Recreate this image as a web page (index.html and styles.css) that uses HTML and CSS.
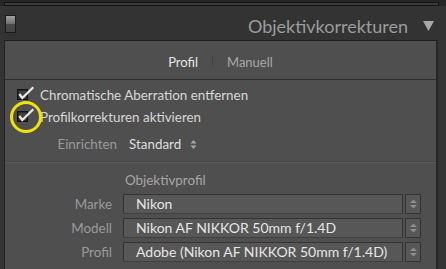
FILE: index.html
```html
<!DOCTYPE html>
<html lang="de">
<head>
  <meta charset="UTF-8">
  <title>Objektivkorrekturen</title>
  <link rel="stylesheet" href="styles.css">
</head>
<body>

<div class="top-strip">
  <div class="prev-panel"></div>
</div>

<div class="panel-header">
  <div class="switch"></div>
  <div class="panel-title">Objektivkorrekturen</div>
  <svg class="collapse" width="11" height="10" viewBox="0 0 11 10"><path d="M0 0 H11 L5.5 10 Z" fill="#a8a8a8"/></svg>
</div>

<div class="panel">
  <div class="tabs">
    <span class="tab active">Profil</span>
    <span class="tab-sep"></span>
    <span class="tab">Manuell</span>
  </div>

  <div class="section">
    <div class="check-row">
      <span class="checkbox">
        <svg width="18" height="16" viewBox="0 0 18 16"><path d="M2.3 9 L5.3 13 L16.3 2.3" fill="none" stroke="#e8e8e8" stroke-width="2.2"/></svg>
      </span>
      <span class="check-label">Chromatische Aberration entfernen</span>
    </div>
    <div class="check-row">
      <span class="checkbox marked">
        <svg width="18" height="16" viewBox="0 0 18 16"><path d="M2.3 9 L5.3 13 L16.3 2.3" fill="none" stroke="#e8e8e8" stroke-width="2.2"/></svg>
      </span>
      <span class="check-label">Profilkorrekturen aktivieren</span>
    </div>
    <div class="setup-row">
      <span class="setup-label">Einrichten</span>
      <span class="setup-value">Standard</span>
      <svg class="updown" width="7" height="11" viewBox="0 0 7 11"><path d="M0.5 4.5 L3.5 1 L6.5 4.5 Z M0.5 6.5 L3.5 10 L6.5 6.5 Z" fill="#a5a5a5"/></svg>
    </div>
  </div>

  <div class="section lens">
    <div class="lens-heading">Objektivprofil</div>
    <div class="field-row">
      <span class="field-label">Marke</span>
      <span class="field-value">Nikon</span>
      <span class="stepper"><svg width="9" height="12" viewBox="0 0 9 12"><path d="M1 5 L4.5 1.5 L8 5 Z M1 7 L4.5 10.5 L8 7 Z" fill="#8e8e8e"/></svg></span>
    </div>
    <div class="field-row">
      <span class="field-label">Modell</span>
      <span class="field-value">Nikon AF NIKKOR 50mm f/1.4D</span>
      <span class="stepper"><svg width="9" height="12" viewBox="0 0 9 12"><path d="M1 5 L4.5 1.5 L8 5 Z M1 7 L4.5 10.5 L8 7 Z" fill="#8e8e8e"/></svg></span>
    </div>
    <div class="field-row">
      <span class="field-label">Profil</span>
      <span class="field-value">Adobe (Nikon AF NIKKOR 50mm f/1.4D)</span>
      <span class="stepper"><svg width="9" height="12" viewBox="0 0 9 12"><path d="M1 5 L4.5 1.5 L8 5 Z M1 7 L4.5 10.5 L8 7 Z" fill="#8e8e8e"/></svg></span>
    </div>
  </div>
</div>

</body>
</html>
```

FILE: styles.css
```css
body {
  margin: 0;
  width: 446px;
  height: 269px;
  overflow: hidden;
  background: #343434;
  font-family: "Lato", "Open Sans", sans-serif;
  font-size: 13.4px;
  color: #d8d8d8;
}

.top-strip {
  height: 6px;
  background: #262626;
  padding: 2px 7px 0 4px;
  box-sizing: border-box;
}

.prev-panel {
  height: 4px;
  box-sizing: border-box;
  border: 1px solid #141414;
  background: #3a3a3a;
}

.panel-header {
  height: 34px;
  display: flex;
  align-items: center;
  padding: 0 12px 0 5px;
  background: #333333;
}

.switch {
  width: 11px;
  height: 18px;
  box-sizing: border-box;
  border: 1px solid #1a1a1a;
  background: linear-gradient(#a0a0a0, #6e6e6e 50%, #4a4a4a 50%, #444444);
  margin-top: 2px;
}

.panel-title {
  margin-left: auto;
  margin-top: 5px;
  margin-right: 15px;
  font-size: 18px;
  color: #9c9c9c;
}

.collapse {
  margin-top: 6px;
}

.panel {
  margin-left: 4px;
  width: 434px;
  height: 240px;
  box-sizing: border-box;
  border-top: 1px solid #1c1c1c;
  border-left: 1px solid #222222;
  border-right: 2px solid #262626;
  background: #4f4f4f;
}

.tabs {
  height: 39px;
  display: flex;
  justify-content: center;
  align-items: center;
  gap: 14px;
  padding-top: 3px;
  box-sizing: border-box;
  border-bottom: 1px solid #2e2e2e;
  font-size: 13px;
}

.tab {
  color: #a8a8a8;
}

.tab.active {
  color: #e6e6e6;
}

.tab-sep {
  width: 1px;
  height: 11px;
  background: #444444;
}

.section {
  padding: 4px 0 6px 12px;
  border-bottom: 1px solid #474747;
}

.check-row {
  height: 22px;
  display: flex;
  align-items: center;
}

.checkbox {
  position: relative;
  flex: none;
  width: 11px;
  height: 11px;
  box-sizing: border-box;
  border: 1px solid #111111;
  background: #404040;
  box-shadow: inset 0 0 0 1px #2a2a2a;
  margin-top: -1px;
}

.checkbox svg {
  position: absolute;
  left: -1px;
  top: -5px;
}

.checkbox.marked::after {
  content: "";
  position: absolute;
  left: -8px;
  top: -11px;
  width: 32px;
  height: 32px;
  box-sizing: border-box;
  border: 3px solid #f0e400;
  border-radius: 50%;
}

.check-label {
  margin-left: 12px;
}

.setup-row {
  height: 22px;
  margin-top: 5px;
  display: flex;
  align-items: center;
}

.setup-label {
  width: 100px;
  text-align: right;
  color: #9a9a9a;
}

.setup-value {
  margin-left: 12px;
  color: #dedede;
}

.updown {
  margin-left: 9px;
}

.lens {
  border-top: 1px solid #585858;
  border-bottom: none;
  padding: 7px 0 0 0;
}

.lens-heading {
  height: 20px;
  line-height: 20px;
  margin: 0 0 4px 120px;
  color: #a6a6a6;
}

.field-row {
  height: 20px;
  display: flex;
  align-items: stretch;
  margin-bottom: 4px;
}

.field-label {
  width: 107px;
  text-align: right;
  color: #9a9a9a;
  line-height: 20px;
}

.field-value {
  margin-left: 11px;
  width: 280px;
  box-sizing: border-box;
  padding-left: 12px;
  line-height: 18px;
  border: 1px solid #343434;
  border-bottom-color: #404040;
  background: #575757;
  color: #e6e6e6;
  font-size: 14px;
}

.stepper {
  margin-left: 2px;
  width: 16px;
  box-sizing: border-box;
  border: 1px solid #343434;
  background: #575757;
  display: flex;
  justify-content: center;
  align-items: center;
}
```
